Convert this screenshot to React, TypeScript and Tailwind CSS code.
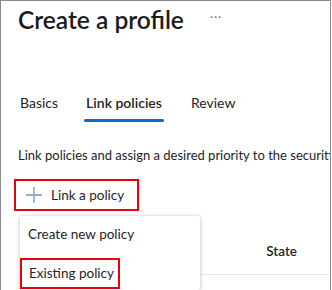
import React from "react";

export default function App() {
  const font = { fontFamily: '"Segoe UI", Lato, "Open Sans", sans-serif' };
  return (
    <div
      className="relative w-[331px] h-[290px] overflow-hidden bg-white border-l border-t border-r border-[#8a8a8a] text-[#242424]"
      style={font}
    >
      <div className="flex items-center pl-[17px] pt-[1px] h-[37px]">
        <h1 className="text-[24.5px] leading-[32px] font-semibold text-[#1b1b1b] whitespace-nowrap">
          Create a profile
        </h1>
        <span className="ml-[26px] text-[12px] text-[#777] tracking-[1px] -mt-[6px]">···</span>
      </div>

      <div className="flex mt-[55px] pl-[19px] text-[14px] leading-[20px] whitespace-nowrap">
        <div className="pb-[8px]">Basics</div>
        <div className="ml-[26px] flex flex-col items-center">
          <div className="font-semibold px-[2px]">Link policies</div>
          <div className="mt-[6px] h-[3px] w-full rounded-[2px] bg-[#0f6cbd]" />
        </div>
        <div className="ml-[27px]">Review</div>
      </div>

      <p className="mt-[23px] pl-[17px] whitespace-nowrap text-[13px] leading-[20px]">
        Link policies and assign a desired priority to the security settings
      </p>

      <div className="mt-[14px] ml-[13px] flex items-center w-[125px] h-[32px] border-2 border-[#e8000b]">
        <svg width="18" height="18" viewBox="0 0 18 18" className="ml-[9px]">
          <path d="M9 1v16M1 9h16" stroke="#7b92b4" strokeWidth="1.3" />
        </svg>
        <span className="ml-[8px] text-[13.5px] whitespace-nowrap">Link a policy</span>
      </div>

      <div className="flex justify-end pr-[33px] mt-[30px] text-[13.5px] font-semibold">State</div>
      <div className="ml-[200px] mt-[13px] h-px bg-[#e6e6e6]" />

      <div className="absolute left-[19px] top-[215px] w-[180px] h-[74px] bg-white rounded-[2px] shadow-[0_0_3px_rgba(0,0,0,0.18),0_2px_6px_rgba(0,0,0,0.14)] text-[13.5px] flex flex-col whitespace-nowrap">
        <div className="h-[36px] flex items-center pl-[8px]">Create new policy</div>
        <div className="mt-[6px] w-[100px] h-[31px] border-2 border-[#e8000b] flex items-center pl-[7px]">
          Existing policy
        </div>
      </div>
    </div>
  );
}
